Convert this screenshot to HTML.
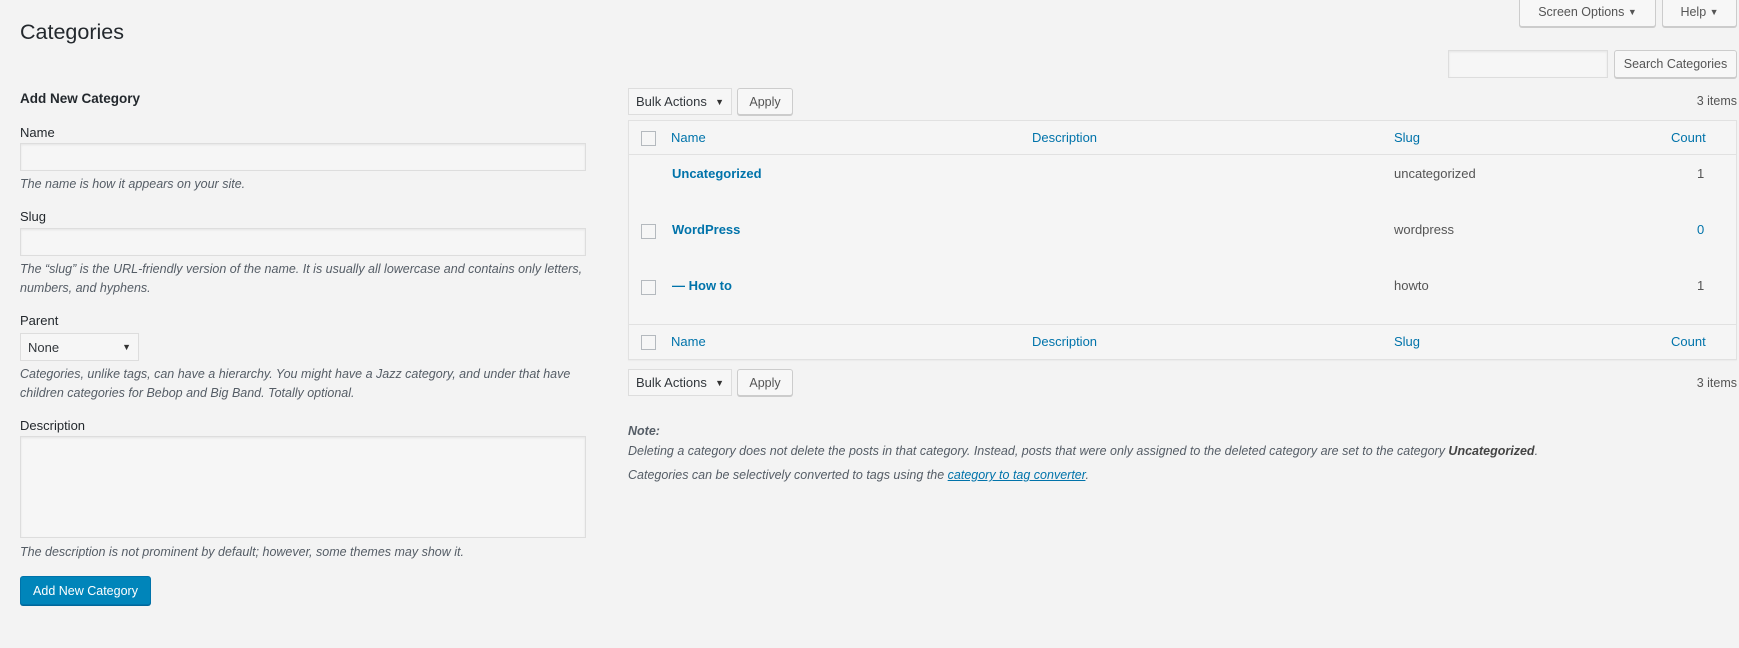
<!DOCTYPE html>
<html><head><meta charset="utf-8"><style>
*{box-sizing:border-box;margin:0;padding:0}
body{width:1739px;height:648px;background:#f3f3f3;font-family:"Liberation Sans",sans-serif;font-size:13px;color:#23282d;position:relative;overflow:hidden}
.a{position:absolute;white-space:nowrap}
.i{font-style:italic;color:#555d66;font-size:12.5px}
.inp{position:absolute;background:#f6f6f6;border:1px solid #ddd;box-shadow:inset 0 1px 2px rgba(0,0,0,.07)}
.btn{position:absolute;background:#f7f7f7;border:1px solid #ccc;border-radius:3px;box-shadow:0 1px 0 #ccc;color:#555;font-size:12.5px;display:flex;align-items:center;justify-content:center}
.sel{position:absolute;background:#f6f6f6;border:1px solid #ddd;font-size:13px;color:#32373c;padding-left:7px;display:flex;align-items:center}
.sel:after{content:"▼";position:absolute;right:7px;font-size:9px;color:#333}
.cb{position:absolute;width:15px;height:15px;border:1px solid #b4b9be;background:#f6f6f6;left:12px}
.l{color:#0073aa}
.b{font-weight:bold;color:#0073aa}
</style></head><body>
<div class="btn" style="left:1519px;top:-3px;width:137px;height:30px;border-radius:0 0 3px 3px">Screen Options&nbsp;<span style="font-size:9px">▼</span></div>
<div class="btn" style="left:1662px;top:-3px;width:75px;height:30px;border-radius:0 0 3px 3px">Help&nbsp;<span style="font-size:9px">▼</span></div>
<div class="a" style="left:20px;top:20px;font-size:21.5px;color:#23282d">Categories</div>
<div class="inp" style="left:1448px;top:50px;width:160px;height:28px"></div>
<div class="btn" style="left:1614px;top:50px;width:123px;height:28px">Search Categories</div>

<div class="a" style="left:20px;top:91px;font-size:13.5px;font-weight:bold">Add New Category</div>
<div class="a" style="left:20px;top:125px">Name</div>
<div class="inp" style="left:20px;top:143px;width:566px;height:28px"></div>
<div class="a i" style="left:20px;top:177px">The name is how it appears on your site.</div>
<div class="a" style="left:20px;top:209px">Slug</div>
<div class="inp" style="left:20px;top:228px;width:566px;height:28px"></div>
<div class="a i" style="left:20px;top:262px">The “slug” is the URL-friendly version of the name. It is usually all lowercase and contains only letters,</div>
<div class="a i" style="left:20px;top:281px">numbers, and hyphens.</div>
<div class="a" style="left:20px;top:313px">Parent</div>
<div class="sel" style="left:20px;top:333px;width:119px;height:28px">None</div>
<div class="a i" style="left:20px;top:367px">Categories, unlike tags, can have a hierarchy. You might have a Jazz category, and under that have</div>
<div class="a i" style="left:20px;top:386px">children categories for Bebop and Big Band. Totally optional.</div>
<div class="a" style="left:20px;top:418px">Description</div>
<div class="inp" style="left:20px;top:436px;width:566px;height:102px"></div>
<div class="a i" style="left:20px;top:545px">The description is not prominent by default; however, some themes may show it.</div>
<div class="a" style="left:20px;top:576px;width:131px;height:29px;background:#0085ba;border:1px solid #0073aa;border-radius:3px;box-shadow:0 1px 0 #006799;color:#fff;font-size:12.5px;display:flex;align-items:center;justify-content:center">Add New Category</div>

<div class="sel" style="left:628px;top:88px;width:104px;height:27px;padding-right:20px">Bulk Actions</div>
<div class="btn" style="left:737px;top:88px;width:56px;height:27px">Apply</div>
<div class="a" style="right:2px;top:94px;font-size:12.5px;color:#555">3 items</div>

<div class="a" style="left:628px;top:120px;width:1109px;height:240px;border:1px solid #e1e1e1;box-shadow:0 1px 1px rgba(0,0,0,.04);background:#f5f5f5">
 <div class="a" style="left:0;top:0;width:1107px;height:34px;border-bottom:1px solid #e1e1e1"></div>
 <div class="a" style="left:0;top:203px;width:1107px;height:35px;border-top:1px solid #e1e1e1"></div>
 <div class="cb" style="top:10px"></div>
 <div class="a l" style="left:42px;top:9px">Name</div>
 <div class="a l" style="left:403px;top:9px">Description</div>
 <div class="a l" style="left:765px;top:9px">Slug</div>
 <div class="a l" style="left:1042px;top:9px">Count</div>
 <div class="a b" style="left:43px;top:45px">Uncategorized</div>
 <div class="a" style="left:765px;top:45px;color:#555">uncategorized</div>
 <div class="a" style="left:1068px;top:45px;color:#555">1</div>
 <div class="cb" style="top:103px"></div>
 <div class="a b" style="left:43px;top:101px">WordPress</div>
 <div class="a" style="left:765px;top:101px;color:#555">wordpress</div>
 <div class="a l" style="left:1068px;top:101px">0</div>
 <div class="cb" style="top:159px"></div>
 <div class="a b" style="left:43px;top:157px">— How to</div>
 <div class="a" style="left:765px;top:157px;color:#555">howto</div>
 <div class="a" style="left:1068px;top:157px;color:#555">1</div>
 <div class="cb" style="top:214px"></div>
 <div class="a l" style="left:42px;top:213px">Name</div>
 <div class="a l" style="left:403px;top:213px">Description</div>
 <div class="a l" style="left:765px;top:213px">Slug</div>
 <div class="a l" style="left:1042px;top:213px">Count</div>
</div>

<div class="sel" style="left:628px;top:369px;width:104px;height:27px;padding-right:20px">Bulk Actions</div>
<div class="btn" style="left:737px;top:369px;width:56px;height:27px">Apply</div>
<div class="a" style="right:2px;top:376px;font-size:12.5px;color:#555">3 items</div>

<div class="a i" style="left:628px;top:424px;font-weight:bold">Note:</div>
<div class="a i" style="left:628px;top:444px">Deleting a category does not delete the posts in that category. Instead, posts that were only assigned to the deleted category are set to the category <b style="color:#444">Uncategorized</b>.</div>
<div class="a i" style="left:628px;top:468px">Categories can be selectively converted to tags using the <span style="color:#0073aa;text-decoration:underline">category to tag converter</span>.</div>
</body></html>
